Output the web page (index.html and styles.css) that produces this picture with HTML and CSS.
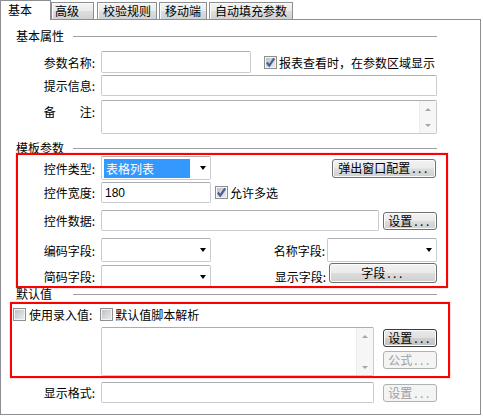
FILE: index.html
```html
<!DOCTYPE html>
<html lang="zh">

<head>
  <meta charset="UTF-8">
  <title>参数设置</title>
  <link rel="stylesheet" href="styles.css">
</head>

<body>

  <div class="tabs">
    <div class="tab active">基本</div>
    <div class="tab wide">高级</div>
    <div class="tab">校验规则</div>
    <div class="tab">移动端</div>
    <div class="tab">自动填充参数</div>
  </div>

  <div class="panel">
    <div class="legend legend-basic"><span>基本属性</span><i></i></div>

    <div class="row row-name">
      <span class="lbl">参数名称:</span>
      <div class="input w150"></div>
      <span class="cb checked cb-show"><svg viewBox="0 0 9 9"><path d="M1.5 4.5 L3.5 7 L7.5 1.2" /></svg></span>
      <span class="cb-text">报表查看时，在参数区域显示</span>
    </div>

    <div class="row row-tip">
      <span class="lbl">提示信息:</span>
      <div class="input grow h21"></div>
    </div>

    <div class="row row-note">
      <span class="lbl lbl-top">备　　注:</span>
      <div class="area grow h34">
        <div class="sb"><b class="up"></b><b class="down"></b></div>
      </div>
    </div>

    <div class="legend legend-template"><span>模板参数</span><i></i></div>

    <div class="row row-type">
      <span class="lbl">控件类型:</span>
      <div class="select w110 h24"><span class="picked">表格列表</span><b class="arrow"></b></div>
      <div class="btn btn-popup">弹出窗口配置<span class="dots">...</span></div>
    </div>

    <div class="row row-width">
      <span class="lbl">控件宽度:</span>
      <div class="input w110 h21"><span class="val">180</span></div>
      <span class="cb checked cb-multi"><svg viewBox="0 0 9 9"><path d="M1.5 4.5 L3.5 7 L7.5 1.2" /></svg></span>
      <span class="cb-text">允许多选</span>
    </div>

    <div class="row row-data">
      <span class="lbl">控件数据:</span>
      <div class="input w278 h21"></div>
      <div class="btn btn-small btn-data">设置<span class="dots">...</span></div>
    </div>

    <div class="row row-code">
      <span class="lbl">编码字段:</span>
      <div class="select w110 h24"><b class="arrow"></b></div>
      <span class="lbl-right">名称字段:</span>
      <div class="select w110 h24"><b class="arrow"></b></div>
    </div>

    <div class="row row-short">
      <span class="lbl">简码字段:</span>
      <div class="select w110 h23"><b class="arrow"></b></div>
      <span class="lbl-right lbl-show">显示字段:</span>
      <div class="btn btn-field">字段<span class="dots">...</span></div>
    </div>

    <div class="legend legend-default"><span>默认值</span><i></i></div>

    <div class="row row-checks">
      <span class="cb cb-input"></span>
      <span class="cb-text">使用录入值:</span>
      <span class="cb cb-script"></span>
      <span class="cb-text">默认值脚本解析</span>
    </div>

    <div class="row row-default">
      <div class="area w273 h49">
        <div class="sb"><b class="up"></b><b class="down"></b></div>
      </div>
      <div class="btn-col">
        <div class="btn btn-small focus">设置<span class="dots">...</span></div>
        <div class="btn btn-small disabled">公式<span class="dots">...</span></div>
      </div>
    </div>

    <div class="row row-format">
      <span class="lbl">显示格式:</span>
      <div class="input w273 h21"></div>
      <div class="btn btn-small disabled btn-format">设置<span class="dots">...</span></div>
    </div>
  </div>

  <div class="mark mark-template"></div>
  <div class="mark mark-default"></div>

</body>

</html>
```

FILE: styles.css
```css
body {
  margin: 0;
  width: 483px;
  height: 416px;
  overflow: hidden;
  position: relative;
  background: #fff;
  color: #000;
  font-family: "Noto Sans CJK SC", "Liberation Sans", sans-serif;
  font-size: 12px;
}

/* tab strip */
.tabs {
  display: flex;
  align-items: flex-end;
  height: 19px;
  position: relative;
  z-index: 1;
}

.tab {
  box-sizing: border-box;
  height: 17px;
  line-height: 15px;
  padding: 0 5px;
  margin-right: 2px;
  border: 1px solid #8c8e94;
  border-bottom: none;
  background: linear-gradient(#f3f3f3 0%, #ebebeb 50%, #dddddd 51%, #d2d2d2 100%);
  box-shadow: inset 1px 1px 0 #fcfcfc;
  white-space: nowrap;
}

.tab.active {
  width: 51px;
  height: 20px;
  line-height: 18px;
  padding-left: 7px;
  margin-right: 0;
  margin-bottom: -1px;
  background: #fff;
  box-shadow: none;
}

.tab.wide {
  padding-left: 3px;
  padding-right: 14px;
  margin-right: 3px;
}

.panel {
  box-sizing: border-box;
  width: 481px;
  height: 396px;
  border: 1px solid #8c8e94;
}

/* group headers */
.legend {
  display: flex;
  align-items: center;
  height: 14px;
  line-height: 14px;
  margin: 0 43px 0 15px;
}

.legend span {
  width: 57px;
  flex: none;
}

.legend i {
  flex: 1;
  border-top: 1px solid #a0a0a0;
}

.legend-basic {
  margin-top: 9px;
}

.legend-template {
  margin-top: 7px;
}

.legend-default {
  margin-top: -1px;
}

/* rows */
.row {
  box-sizing: border-box;
  display: flex;
  align-items: center;
  width: 436px;
}

.lbl {
  width: 94px;
  margin-right: 6px;
  flex: none;
  text-align: right;
  white-space: nowrap;
}

.lbl-top {
  align-self: flex-start;
  margin-top: 3px;
}

.lbl-right {
  margin-left: auto;
  margin-right: 2px;
}

.lbl-show {
  margin-right: 3px;
}

.row-name {
  margin-top: 8px;
}

.row-tip {
  margin-top: 2px;
}

.row-note {
  margin-top: 4px;
  align-items: flex-start;
}

.row-type {
  margin-top: 1px;
}

.row-width {
  margin-top: 2px;
}

.row-data {
  margin-top: 7px;
}

.row-code {
  margin-top: 7px;
}

.row-short {
  margin-top: 3px;
}

.row-checks {
  margin-top: 5px;
  height: 16px;
}

.row-default {
  margin-top: 5px;
  padding-left: 100px;
  align-items: flex-start;
}

.row-format {
  margin-top: 6px;
}

/* fields */
.input,
.select,
.area {
  box-sizing: border-box;
  flex: none;
  height: 22px;
  background: #fff;
  border: 1px solid #c9cbd0;
  border-top-color: #abadb3;
  border-radius: 2px;
}

.grow {
  flex: 1;
}

.w110 { width: 110px; }
.w150 { width: 150px; }
.w273 { width: 273px; }
.w278 { width: 278px; }
.h21 { height: 21px; }
.h23 { height: 23px; }
.h24 { height: 24px; }
.h34 { height: 34px; }
.h49 { height: 49px; }

.input {
  display: flex;
  align-items: center;
}

.val {
  padding-left: 3px;
  font-family: "Liberation Sans", sans-serif;
}

.select {
  display: flex;
  align-items: center;
  padding: 2px 4px 2px 2px;
}

.picked {
  width: 86px;
  height: 19px;
  line-height: 19px;
  padding-left: 2px;
  box-sizing: border-box;
  background: #3399ff;
  color: #fff;
}

.arrow {
  margin-left: auto;
  width: 0;
  height: 0;
  border-left: 3.5px solid transparent;
  border-right: 3.5px solid transparent;
  border-top: 4px solid #000;
}

.area {
  display: flex;
}

.sb {
  margin-left: auto;
  width: 16px;
  display: flex;
  flex-direction: column;
  justify-content: space-between;
  background: #f6f6f6;
  border-left: 1px solid #ececec;
}

.sb b {
  height: 16px;
  display: flex;
  align-items: center;
  justify-content: center;
}

.sb b::after {
  content: "";
  width: 0;
  height: 0;
  border-left: 3px solid transparent;
  border-right: 3px solid transparent;
}

.sb .up::after {
  border-bottom: 3px solid #a5a5a5;
}

.sb .down::after {
  border-top: 3px solid #a5a5a5;
}

/* checkboxes */
.cb {
  box-sizing: border-box;
  width: 13px;
  height: 13px;
  flex: none;
  border: 1px solid #8e8f8f;
  background: linear-gradient(135deg, #b9bdc3, #eeeff0);
  box-shadow: inset 0 0 0 1px #f4f4f4;
  display: flex;
}

.cb svg {
  width: 11px;
  height: 11px;
}

.cb path {
  fill: none;
  stroke: #4a5f97;
  stroke-width: 1.8;
}

.cb-text {
  margin-left: 2px;
  white-space: nowrap;
}

.cb-show {
  margin-left: 13px;
}

.cb-multi {
  margin-left: 4px;
}

.cb-input {
  margin-left: 12px;
}

.cb-input + .cb-text {
  margin-left: 3px;
}

.cb-script {
  margin-left: 8px;
}

/* buttons */
.btn {
  box-sizing: border-box;
  flex: none;
  height: 19px;
  line-height: 16px;
  text-align: center;
  border: 1px solid #707070;
  border-radius: 3px;
  background: linear-gradient(#f2f2f2 0%, #ebebeb 48%, #dddddd 52%, #cfcfcf 100%);
  box-shadow: inset 0 0 0 1px #fbfbfb;
  white-space: nowrap;
}

.dots {
  letter-spacing: 2.5px;
  padding-left: 2px;
}

.btn-popup {
  width: 104px;
  margin-left: auto;
  margin-right: 1px;
}

.btn-small {
  width: 54px;
  height: 18px;
}

.btn-data {
  margin-left: 4px;
}

.btn-field {
  width: 108px;
  height: 20px;
  line-height: 17px;
  align-self: flex-start;
  margin-top: -2px;
}

.btn-col {
  display: flex;
  flex-direction: column;
  gap: 4px;
  margin-left: 9px;
  padding-top: 2px;
}

.btn.focus {
  border-color: #3c3c3c;
  background: linear-gradient(#eaeaea 0%, #e0e0e0 48%, #cfcfcf 52%, #c2c2c2 100%);
}

.btn.disabled {
  border-color: #adb2b5;
  background: #f4f4f4;
  box-shadow: none;
  color: #a0a0a0;
}

.btn-format {
  margin-left: 9px;
}

/* red annotation boxes laid over the form */
.mark {
  position: absolute;
  box-sizing: border-box;
  border: 2px solid #ff0000;
  box-shadow: 0 0 1px rgba(255, 0, 0, 0.6);
  pointer-events: none;
}

.mark-template {
  left: 16px;
  top: 153px;
  width: 432px;
  height: 135px;
}

.mark-default {
  left: 10px;
  top: 302px;
  width: 440px;
  height: 76px;
}
```
